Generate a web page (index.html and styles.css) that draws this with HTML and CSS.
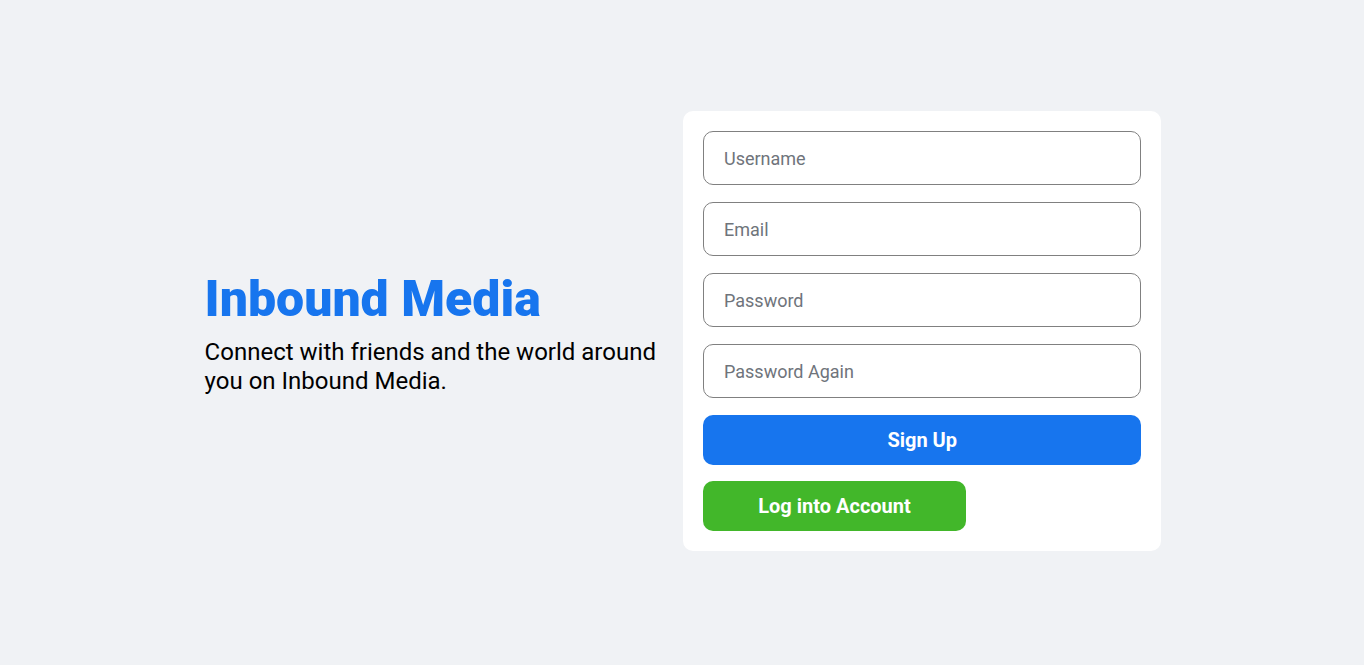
FILE: index.html
```html
<!DOCTYPE html>
<html>
<head>
<meta charset="utf-8">
<link rel="stylesheet" href="styles.css">
</head>
<body>
<div class="login">
  <div class="login-wrapper">
    <div class="login-left">
      <h3 class="login-logo">Inbound Media</h3>
      <span class="login-desc">Connect with friends and the world around you on Inbound Media.</span>
    </div>
    <div class="login-right">
      <form class="login-box">
        <input class="login-input" placeholder="Username">
        <input class="login-input" placeholder="Email" type="email">
        <input class="login-input" placeholder="Password" type="password">
        <input class="login-input" placeholder="Password Again" type="password">
        <button class="login-button" type="button">Sign Up</button>
        <button class="login-register-button" type="button">Log into Account</button>
      </form>
    </div>
  </div>
</div>
</body>
</html>
```

FILE: styles.css
```css
* { box-sizing: border-box; }
html, body { margin: 0; padding: 0; }
body { font-family: Roboto, "Liberation Sans", sans-serif; }
.login {
  width: 100vw;
  height: 100vh;
  background-color: #f0f2f5;
  display: flex;
  align-items: center;
  justify-content: center;
}
.login-wrapper {
  width: 70%;
  height: 70%;
  display: flex;
}
.login-left, .login-right {
  flex: 1;
  display: flex;
  flex-direction: column;
  justify-content: center;
}
.login-right { padding-bottom: 3px; }
.login-logo {
  font-size: 50px;
  font-weight: 900;
  color: #1775ee;
  margin: 0 0 10px 0;
}
.login-desc {
  font-size: 24px;
  line-height: 29px;
  color: #000;
}
.login-box {
  height: 440px;
  margin: 0 -2px 0 1px;
  padding: 20px;
  background-color: #fff;
  border-radius: 10px;
  display: flex;
  flex-direction: column;
  gap: 17px;
}
.login-input {
  height: 54px;
  flex: none;
  border-radius: 10px;
  border: 1px solid gray;
  font-size: 18px;
  font-family: Roboto, sans-serif;
  padding-left: 20px;
  color: #000;
}
.login-input::placeholder { color: #6f747b; }
.login-input:focus { outline: none; }
.login-button, .login-register-button {
  height: 50px;
  flex: none;
  border-radius: 10px;
  border: none;
  color: #fff;
  font-size: 20px;
  font-weight: 700;
  font-family: Roboto, sans-serif;
  cursor: pointer;
}
.login-button { background-color: #1775ee; }
.login-register-button {
  width: 60%;
  margin-top: -1px;
  background-color: #42b72a;
}
```
